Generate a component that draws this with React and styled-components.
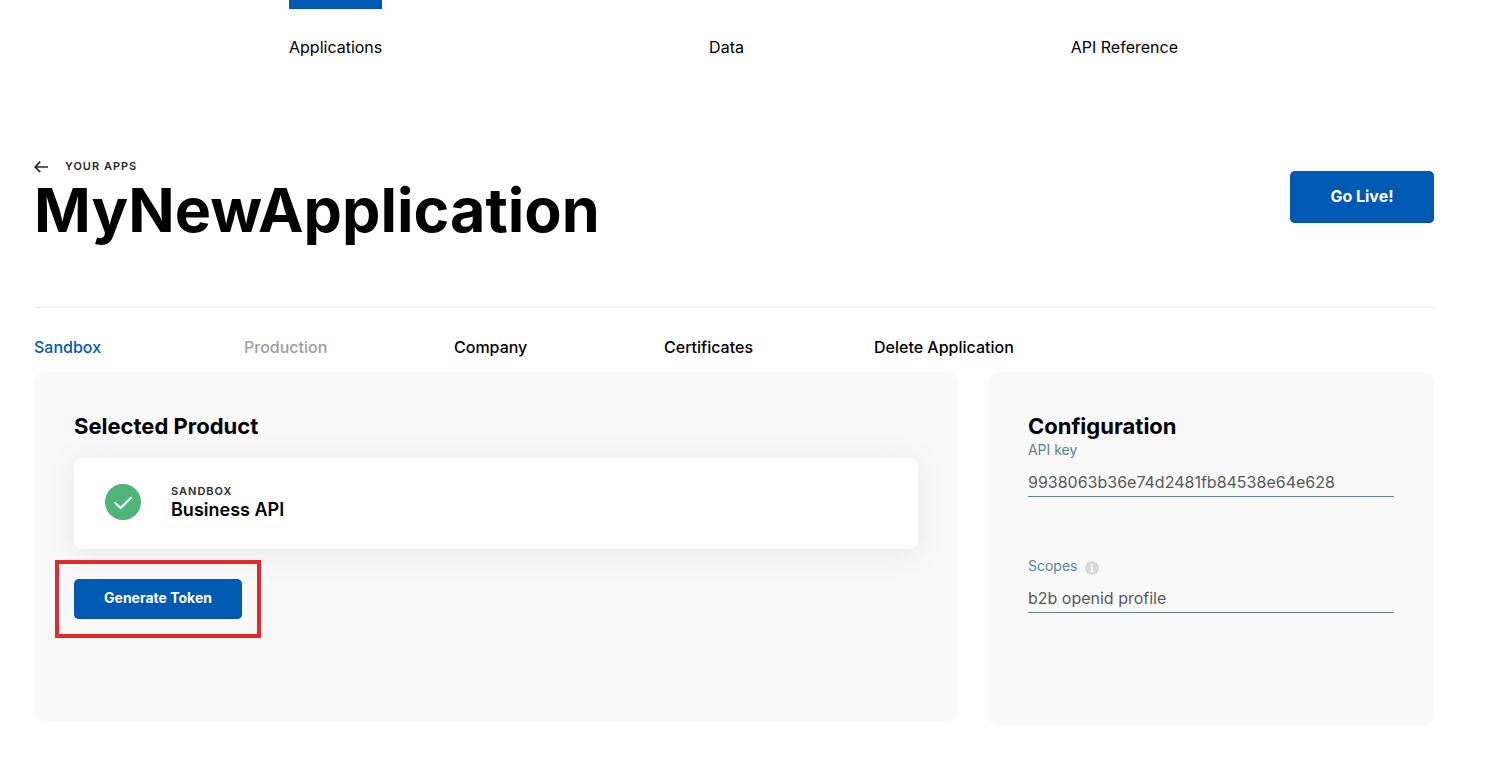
import React from "react";
import styled, { createGlobalStyle } from "styled-components";

const GlobalStyle = createGlobalStyle`
  *, *::before, *::after { box-sizing: border-box; }
  body {
    margin: 0;
    background: #fff;
    color: #000;
    font: 400 16px/24px Inter, "Liberation Sans", sans-serif;
  }
  h1, h2, h3, p { margin: 0; }
  a { color: inherit; text-decoration: none; }
`;

const TopNav = styled.nav`
  display: flex;
  justify-content: space-between;
  padding: 0 326px 0 289px;
`;

const TopNavLink = styled.a`
  padding-top: 26px;
  border-top: 9px solid ${({ $active }) => ($active ? "#0059b3" : "transparent")};
`;

const Page = styled.main`
  padding: 99px 70px 47px 34px;
`;

const Header = styled.header`
  display: flex;
  justify-content: space-between;
  align-items: flex-start;
  padding-bottom: 61px;
  border-bottom: 1px solid #e6e6e6;
`;

const BackLink = styled.a`
  display: flex;
  align-items: center;
  gap: 17px;
`;

const Overline = styled.p`
  font-size: 11px;
  line-height: 16px;
  font-weight: 600;
  letter-spacing: 1px;
  text-transform: uppercase;
  color: #2b2b2b;
`;

const Title = styled.h1`
  font-size: 61px;
  line-height: 72px;
  font-weight: 700;
`;

const Button = styled.button`
  height: ${({ $large }) => ($large ? 52 : 40)}px;
  min-width: ${({ $large }) => ($large ? 144 : 168)}px;
  padding: 0 20px 2px;
  border: 0;
  border-radius: 5px;
  background: #0059b3;
  box-shadow: inset 0 -1px 0 #004c99;
  color: #fff;
  font: inherit;
  font-size: ${({ $large }) => ($large ? 16 : 14)}px;
  font-weight: 700;
  cursor: pointer;
`;

const HeaderAction = styled.div`
  padding-top: 13px;
`;

const Tabs = styled.nav`
  display: flex;
  padding: 27px 0 13px;
`;

const Tab = styled.a`
  flex: 0 0 15%;
  white-space: nowrap;
  font-weight: 500;
  color: ${({ $active, $muted }) => ($active ? "#0059b3" : $muted ? "#9e9e9e" : "#000")};
`;

const Panels = styled.div`
  display: grid;
  grid-template-columns: 29fr 14fr;
  gap: 30px;
  align-items: start;
`;

const Panel = styled.section`
  min-height: ${({ $height }) => $height}px;
  padding: 40px;
  border-radius: 12px;
  background: #f9f9f9;
`;

const PanelTitle = styled.h2`
  font-size: 22px;
  line-height: 28px;
  font-weight: 700;
`;

const ProductCard = styled.article`
  display: flex;
  align-items: center;
  gap: 30px;
  height: 91px;
  margin: 18px 0 30px;
  padding: 0 31px 4px;
  border-radius: 8px;
  background: #fff;
  box-shadow: 0 4px 32px rgba(0, 0, 0, 0.08);
`;

const ProductName = styled.h3`
  font-size: 18px;
  line-height: 22px;
  font-weight: 600;
`;

const Highlight = styled.div`
  display: inline-block;
  vertical-align: top;
  outline: 4px solid #e62828;
  outline-offset: 15px;
`;

const Field = styled.div`
  display: flex;
  flex-direction: column;
  & + & {
    margin-top: 59px;
  }
`;

const LabelRow = styled.div`
  display: flex;
  align-items: center;
  gap: 8px;
  height: 20px;
`;

const Label = styled.label`
  font-size: 14px;
  line-height: 20px;
  color: #5b8299;
`;

const InfoIcon = styled.svg`
  margin-top: 4px;
`;

const Input = styled.input`
  width: 100%;
  height: 37px;
  padding: 7px 0 0;
  border: 0;
  border-bottom: 1px solid #5d7f90;
  border-radius: 0;
  background: transparent;
  font: inherit;
  color: #58595b;
`;

const tabs = [
  { name: "Sandbox", active: true },
  { name: "Production", muted: true },
  { name: "Company" },
  { name: "Certificates" },
  { name: "Delete Application" },
];

export default function App() {
  return (
    <>
      <GlobalStyle />
      <TopNav>
        <TopNavLink href="#applications" $active>Applications</TopNavLink>
        <TopNavLink href="#data">Data</TopNavLink>
        <TopNavLink href="#reference">API Reference</TopNavLink>
      </TopNav>
      <Page>
        <Header>
          <div>
            <BackLink href="#apps">
              <svg width="14" height="14" viewBox="0 0 14 14" fill="none" stroke="#2b2b2b" strokeWidth="1.7" aria-hidden="true">
                <path d="M6.2 2.6 1.2 8l5 5.2M1.2 8H14" />
              </svg>
              <Overline>Your apps</Overline>
            </BackLink>
            <Title>MyNewApplication</Title>
          </div>
          <HeaderAction>
            <Button $large>Go Live!</Button>
          </HeaderAction>
        </Header>
        <Tabs>
          {tabs.map((t) => (
            <Tab key={t.name} href="#tab" $active={t.active} $muted={t.muted}>{t.name}</Tab>
          ))}
        </Tabs>
        <Panels>
          <Panel $height={349}>
            <PanelTitle>Selected Product</PanelTitle>
            <ProductCard>
              <svg width="36" height="36" viewBox="0 0 36 36" fill="none" aria-hidden="true">
                <circle cx="18" cy="18" r="18" fill="#4db578" />
                <path d="m10.2 19 5.4 5L26 13.8" stroke="#fff" strokeWidth="2.2" strokeLinecap="round" />
              </svg>
              <div>
                <Overline>Sandbox</Overline>
                <ProductName>Business API</ProductName>
              </div>
            </ProductCard>
            <Highlight>
              <Button>Generate Token</Button>
            </Highlight>
          </Panel>
          <Panel $height={354}>
            <PanelTitle>Configuration</PanelTitle>
            <Field>
              <LabelRow>
                <Label htmlFor="api-key">API key</Label>
              </LabelRow>
              <Input id="api-key" readOnly defaultValue="9938063b36e74d2481fb84538e64e628" />
            </Field>
            <Field>
              <LabelRow>
                <Label htmlFor="scopes">Scopes</Label>
                <InfoIcon width="14" height="14" viewBox="0 0 14 14" aria-hidden="true">
                  <circle cx="7" cy="7" r="7" fill="#d8d8d8" />
                  <path d="M6 2.8h2v1.8H6zM5.3 5.8H8v4.3h.8v1H5.3v-1h.8V6.8h-.8z" fill="#f9f9f9" />
                </InfoIcon>
              </LabelRow>
              <Input id="scopes" readOnly defaultValue="b2b openid profile" />
            </Field>
          </Panel>
        </Panels>
      </Page>
    </>
  );
}
